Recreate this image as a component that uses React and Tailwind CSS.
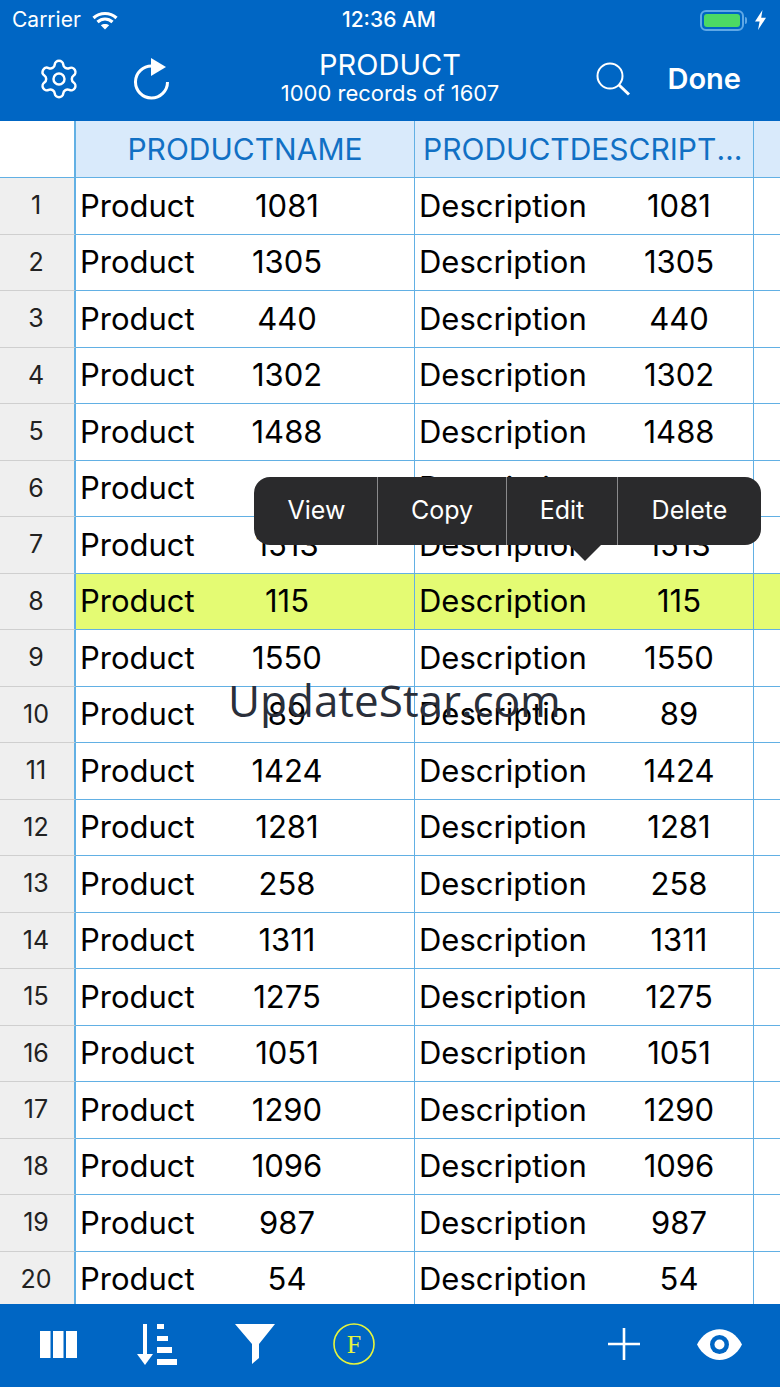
import React from "react";
import { Settings } from "lucide-react";

const rows = [1081, 1305, 440, 1302, 1488, "", 1513, 115, 1550, 89, 1424, 1281, 258, 1311, 1275, 1051, 1290, 1096, 987, 54];

const StatusBar = () => (
  <div className="grid grid-cols-[1fr_auto_1fr] items-center h-[40px] pl-[12px] pr-[14px] text-white text-[21px]">
    <div className="flex items-center gap-[11px]">
      <span>Carrier</span>
      <svg width="26" height="19" viewBox="0 0 26 19" fill="none" stroke="white" strokeWidth="3.2">
        <path d="M1.5 7 C8 1 18 1 24.5 7" />
        <path d="M5.5 11 C10 7 16 7 20.5 11" />
        <path d="M13 18.5 L8.8 14.3 C11 12.6 15 12.6 17.2 14.3 Z" fill="white" stroke="none" />
      </svg>
    </div>
    <span className="font-medium">12:36 AM</span>
    <div className="flex items-center justify-end gap-[8px]">
      <div className="flex items-center">
        <div className="w-[44px] h-[21px] rounded-[6px] border-2 border-[#5fa8e6] p-[2px]">
          <div className="w-full h-full rounded-[3px] bg-[#4cd964]" />
        </div>
        <div className="w-[2px] h-[7px] bg-[#5fa8e6] ml-[1px] rounded-r" />
      </div>
      <svg width="11" height="20" viewBox="0 0 11 20" fill="white">
        <path d="M7.5 0 L0 11.5 H4.6 L3 20 L11 7.8 H6.2 Z" />
      </svg>
    </div>
  </div>
);

const NavBar = () => (
  <div className="grid grid-cols-[1fr_auto_1fr] items-center h-[81px] text-white">
    <div className="flex items-center pl-[37px] gap-[54px] pb-[4px]">
      <Settings size={44} strokeWidth={1.35} />
      <svg width="36" height="42" viewBox="0 0 36 42" fill="none" className="-ml-[1px]">
        <path d="M33.5 24 A16 16 0 1 1 18 8" stroke="white" strokeWidth="3" />
        <path d="M17 0 L32 9 L17 18 Z" fill="white" />
      </svg>
    </div>
    <div className="flex flex-col items-center">
      <span className="text-[29px] leading-[34px]">PRODUCT</span>
      <span className="text-[22px] leading-[25px] -mt-[1px] pb-[8px]">1000 records of 1607</span>
    </div>
    <div className="flex items-center justify-end pr-[39px] gap-[38px] pb-[4px]">
      <svg width="34" height="34" viewBox="0 0 34 34" fill="none" stroke="white">
        <circle cx="14" cy="14" r="12.5" strokeWidth="2" />
        <path d="M23 23 L33 32.5" strokeWidth="3" />
      </svg>
      <span className="text-[29px] font-semibold">Done</span>
    </div>
  </div>
);

const HeaderRow = () => (
  <div className="flex h-[57px] shrink-0 text-[#1170c4] text-[30px] border-b border-[#62b0e4]">
    <div className="w-[76px] bg-white border-r-2 border-[#62b0e4]" />
    <div className="w-[339px] bg-[#d9eafb] border-r border-[#62b0e4] flex items-center justify-center">
      PRODUCTNAME
    </div>
    <div className="w-[339px] bg-[#d9eafb] border-r border-[#62b0e4] flex items-center pl-[8px] pr-[3px]">
      <span className="truncate">PRODUCTDESCRIPTION</span>
    </div>
    <div className="flex-1 bg-[#d9eafb]" />
  </div>
);

const Row = ({ index, value }) => {
  const selected = index === 8;
  const bg = selected ? "bg-[#e4fb73]" : "bg-white";
  return (
    <div className="flex h-[56.5px] shrink-0 text-black text-[31px]">
      <div className="w-[76px] bg-[#efefef] border-r-2 border-b border-r-[#62b0e4] border-b-[#cfcfcf] flex items-center justify-center text-[25px] text-[#222]">
        <span className="pr-[2px]">{index}</span>
      </div>
      <div className={`w-[339px] flex items-center pl-[4px] border-r border-b border-[#62b0e4] ${bg}`}>
        <span className="w-[114px]">Product</span>
        <span className="w-[100px] ml-[43px] text-center">{value}</span>
      </div>
      <div className={`w-[339px] flex items-center pl-[4px] border-r border-b border-[#62b0e4] ${bg}`}>
        <span className="w-[164px]">Description</span>
        <span className="w-[100px] ml-[46px] text-center">{value}</span>
      </div>
      <div className={`flex-1 border-b border-[#62b0e4] ${bg}`} />
    </div>
  );
};

const PopupMenu = () => (
  <div className="absolute left-[254px] top-[477px] w-[507px] h-[68px] text-white text-[25px]">
    <div className="flex h-full rounded-[16px] bg-[#2a2a2c] overflow-hidden">
      <div className="w-[124px] flex items-center justify-center pl-[2px] border-r border-[#8a8a8c]">View</div>
      <div className="w-[129px] flex items-center justify-center border-r border-[#8a8a8c]">Copy</div>
      <div className="w-[111px] flex items-center justify-center border-r border-[#8a8a8c]">Edit</div>
      <div className="flex-1 flex items-center justify-center">Delete</div>
    </div>
    <div className="absolute left-[315px] top-[68px] w-0 h-0 border-x-[16px] border-x-transparent border-t-[16px] border-t-[#2a2a2c]" />
  </div>
);

const BottomBar = () => (
  <div className="flex justify-between items-center h-[83px] shrink-0 bg-[#0066c4] pl-[40px] pr-[38px] pb-[3px]">
    <div className="flex items-center">
      <svg width="37" height="27" viewBox="0 0 37 27" fill="white">
        <rect x="0" y="0" width="10.5" height="27" />
        <rect x="13" y="0" width="10.5" height="27" />
        <rect x="26" y="0" width="11" height="27" />
      </svg>
      <svg width="40" height="41" viewBox="0 0 40 41" fill="white" className="ml-[60px]">
        <rect x="6" y="0" width="4" height="32" />
        <path d="M0 30 H16 L8 41 Z" />
        <rect x="20" y="0" width="7" height="5" />
        <rect x="20" y="12" width="11" height="5" />
        <rect x="20" y="23" width="15" height="6" />
        <rect x="20" y="35" width="20" height="6" />
      </svg>
      <svg width="40" height="40" viewBox="0 0 40 40" fill="white" className="ml-[58px]">
        <path d="M0 0 H40 L24 20 V34 L17 40 V20 Z" />
      </svg>
      <svg width="42" height="42" viewBox="0 0 42 42" className="ml-[58px]">
        <circle cx="21" cy="21" r="20" fill="none" stroke="#e6f53c" strokeWidth="1.6" />
        <text x="21" y="30" textAnchor="middle" fontSize="26" fontFamily="Liberation Serif, serif" fill="#e6f53c">F</text>
      </svg>
    </div>
    <div className="flex items-center gap-[57px]">
      <svg width="32" height="32" viewBox="0 0 32 32" stroke="white" strokeWidth="2.6">
        <path d="M16 0 V32 M0 16 H32" />
      </svg>
      <svg width="45" height="31" viewBox="0 0 45 31">
        <path d="M0 15.5 C10 -5 35 -5 45 15.5 C35 36 10 36 0 15.5 Z" fill="white" />
        <circle cx="22.5" cy="15.5" r="9.5" fill="#0066c4" />
        <circle cx="22.5" cy="15.5" r="5" fill="white" />
      </svg>
    </div>
  </div>
);

const App = () => {
  return (
    <div className="relative w-[780px] h-[1387px] flex flex-col overflow-hidden bg-white font-['Inter',sans-serif]">
      <div className="shrink-0 bg-[#0066c4]">
        <StatusBar />
        <NavBar />
      </div>
      <HeaderRow />
      <div className="flex-1 overflow-hidden flex flex-col">
        {rows.map((value, i) => (
          <Row key={i} index={i + 1} value={value} />
        ))}
      </div>
      <BottomBar />
      <PopupMenu />
      <div className="absolute left-[228px] top-[667px] text-[44px] text-[#2a2f3a] font-['Open_Sans',sans-serif] whitespace-nowrap">
        UpdateStar.com
      </div>
    </div>
  );
};

export default App;
